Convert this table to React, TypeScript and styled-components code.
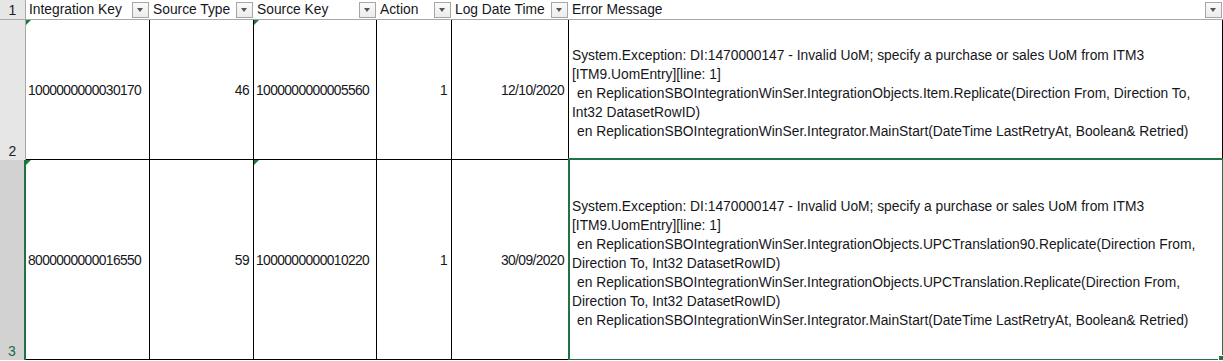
import React from 'react';
import styled, { createGlobalStyle } from 'styled-components';

const GREEN = '#217346';

const GlobalStyle = createGlobalStyle`
  html, body {
    margin: 0;
    padding: 0;
    background: #fff;
  }
  body {
    font-family: "Liberation Sans", Arial, sans-serif;
  }
`;

const Sheet = styled.div`
  display: grid;
  grid-template-columns: 26px 124px 104px 123px 75px 117px 654px;
  grid-template-rows: 20px 140px 200px;
  width: 1223px;
  font-size: 13.8px;
  color: #161620;
`;

const RowHead = styled.div<{ $selected?: boolean; $header?: boolean }>`
  box-sizing: border-box;
  display: flex;
  justify-content: center;
  align-items: ${p => (p.$header ? 'center' : 'flex-end')};
  padding-bottom: ${p => (p.$header ? '0' : '1px')};
  background: ${p => (p.$selected ? '#d2d2d2' : '#e6e6e6')};
  border-right: ${p => (p.$selected ? `2px solid ${GREEN}` : '1px solid #a8a8a8')};
  border-bottom: ${p => (p.$header ? '1px solid #a8a8a8' : 'none')};
  color: ${p => (p.$selected ? '#1c6b3f' : '#222')};
  font-size: 14px;
`;

const HeadCell = styled.div`
  box-sizing: border-box;
  display: flex;
  align-items: center;
  justify-content: space-between;
  padding: 0 1px 0 3px;
  border-bottom: 1px solid #a8a8a8;
  white-space: nowrap;
  overflow: hidden;
`;

const FilterButton = styled.span`
  box-sizing: border-box;
  flex: none;
  position: relative;
  width: 17px;
  height: 16px;
  border: 1px solid #a6a6a6;
  background: linear-gradient(#fafafa, #ececec);

  &::after {
    content: '';
    position: absolute;
    left: 4px;
    top: 5px;
    border-left: 3.5px solid transparent;
    border-right: 3.5px solid transparent;
    border-top: 4px solid #555;
  }
`;

const Cell = styled.div<{ $align?: 'left' | 'right'; $digits?: boolean }>`
  position: relative;
  box-sizing: border-box;
  display: flex;
  align-items: center;
  justify-content: ${p => (p.$align === 'right' ? 'flex-end' : 'flex-start')};
  padding: ${p => (p.$align === 'right' ? '2px 4px 0 2px' : '2px 2px 0')};
  border-right: 1px solid #000;
  border-bottom: 1px solid #000;
  white-space: nowrap;
  letter-spacing: ${p => (p.$digits ? '-0.6px' : '0')};
`;

const TextMarker = styled.span`
  position: absolute;
  top: 0;
  left: 0;
  border-top: 5px solid #1e7b3c;
  border-right: 5px solid transparent;
`;

const Message = styled.div`
  padding: 6px 0 0 1px;
  line-height: 19px;
`;

const Line = styled.div<{ $indent?: boolean }>`
  padding-left: ${p => (p.$indent ? '5px' : '0')};
  white-space: pre;
`;

const Selection = styled.div`
  position: absolute;
  top: -2px;
  left: -1px;
  right: -2px;
  bottom: -2px;
  border: 2px solid ${GREEN};
  pointer-events: none;
`;

const FillHandle = styled.span`
  position: absolute;
  right: -3px;
  bottom: -3px;
  width: 5px;
  height: 5px;
  background: ${GREEN};
  border: 1px solid #fff;
`;

const HEADERS = ['Integration Key', 'Source Type', 'Source Key', 'Action', 'Log Date Time', 'Error Message'];

const EXCEPTION = 'System.Exception: DI:1470000147 - Invalid UoM; specify a purchase or sales UoM from ITM3';
const ENTRY = '[ITM9.UomEntry][line: 1]';
const MAIN = 'en ReplicationSBOIntegrationWinSer.Integrator.MainStart(DateTime LastRetryAt, Boolean& Retried)';

interface MsgLine {
  text: string;
  indent?: boolean;
}

interface Row {
  num: number;
  key: string;
  type: string;
  source: string;
  action: string;
  date: string;
  lines: MsgLine[];
  selected?: boolean;
}

const ROWS: Row[] = [
  {
    num: 2,
    key: '1000000000030170',
    type: '46',
    source: '1000000000005560',
    action: '1',
    date: '12/10/2020',
    lines: [
      { text: EXCEPTION },
      { text: ENTRY },
      {
        text: 'en ReplicationSBOIntegrationWinSer.IntegrationObjects.Item.Replicate(Direction From, Direction To,',
        indent: true
      },
      { text: 'Int32 DatasetRowID)' },
      { text: MAIN, indent: true }
    ]
  },
  {
    num: 3,
    key: '8000000000016550',
    type: '59',
    source: '1000000000010220',
    action: '1',
    date: '30/09/2020',
    selected: true,
    lines: [
      { text: EXCEPTION },
      { text: ENTRY },
      {
        text: 'en ReplicationSBOIntegrationWinSer.IntegrationObjects.UPCTranslation90.Replicate(Direction From,',
        indent: true
      },
      { text: 'Direction To, Int32 DatasetRowID)' },
      {
        text: 'en ReplicationSBOIntegrationWinSer.IntegrationObjects.UPCTranslation.Replicate(Direction From,',
        indent: true
      },
      { text: 'Direction To, Int32 DatasetRowID)' },
      { text: MAIN, indent: true }
    ]
  }
];

const App: React.FC = () => (
  <>
    <GlobalStyle />
    <Sheet>
      <RowHead $header>1</RowHead>
      {HEADERS.map(label => (
        <HeadCell key={label}>
          <span>{label}</span>
          <FilterButton />
        </HeadCell>
      ))}

      {ROWS.map(row => (
        <React.Fragment key={row.num}>
          <RowHead $selected={row.selected}>{row.num}</RowHead>
          <Cell $digits>
            <TextMarker />
            {row.key}
          </Cell>
          <Cell $align="right" $digits>
            {row.type}
          </Cell>
          <Cell $digits>
            <TextMarker />
            {row.source}
          </Cell>
          <Cell $align="right" $digits>
            {row.action}
          </Cell>
          <Cell $align="right" $digits>
            {row.date}
          </Cell>
          <Cell>
            <Message>
              {row.lines.map((line, i) => (
                <Line key={i} $indent={line.indent}>
                  {line.text}
                </Line>
              ))}
            </Message>
            {row.selected && (
              <Selection>
                <FillHandle />
              </Selection>
            )}
          </Cell>
        </React.Fragment>
      ))}
    </Sheet>
  </>
);

export default App;
